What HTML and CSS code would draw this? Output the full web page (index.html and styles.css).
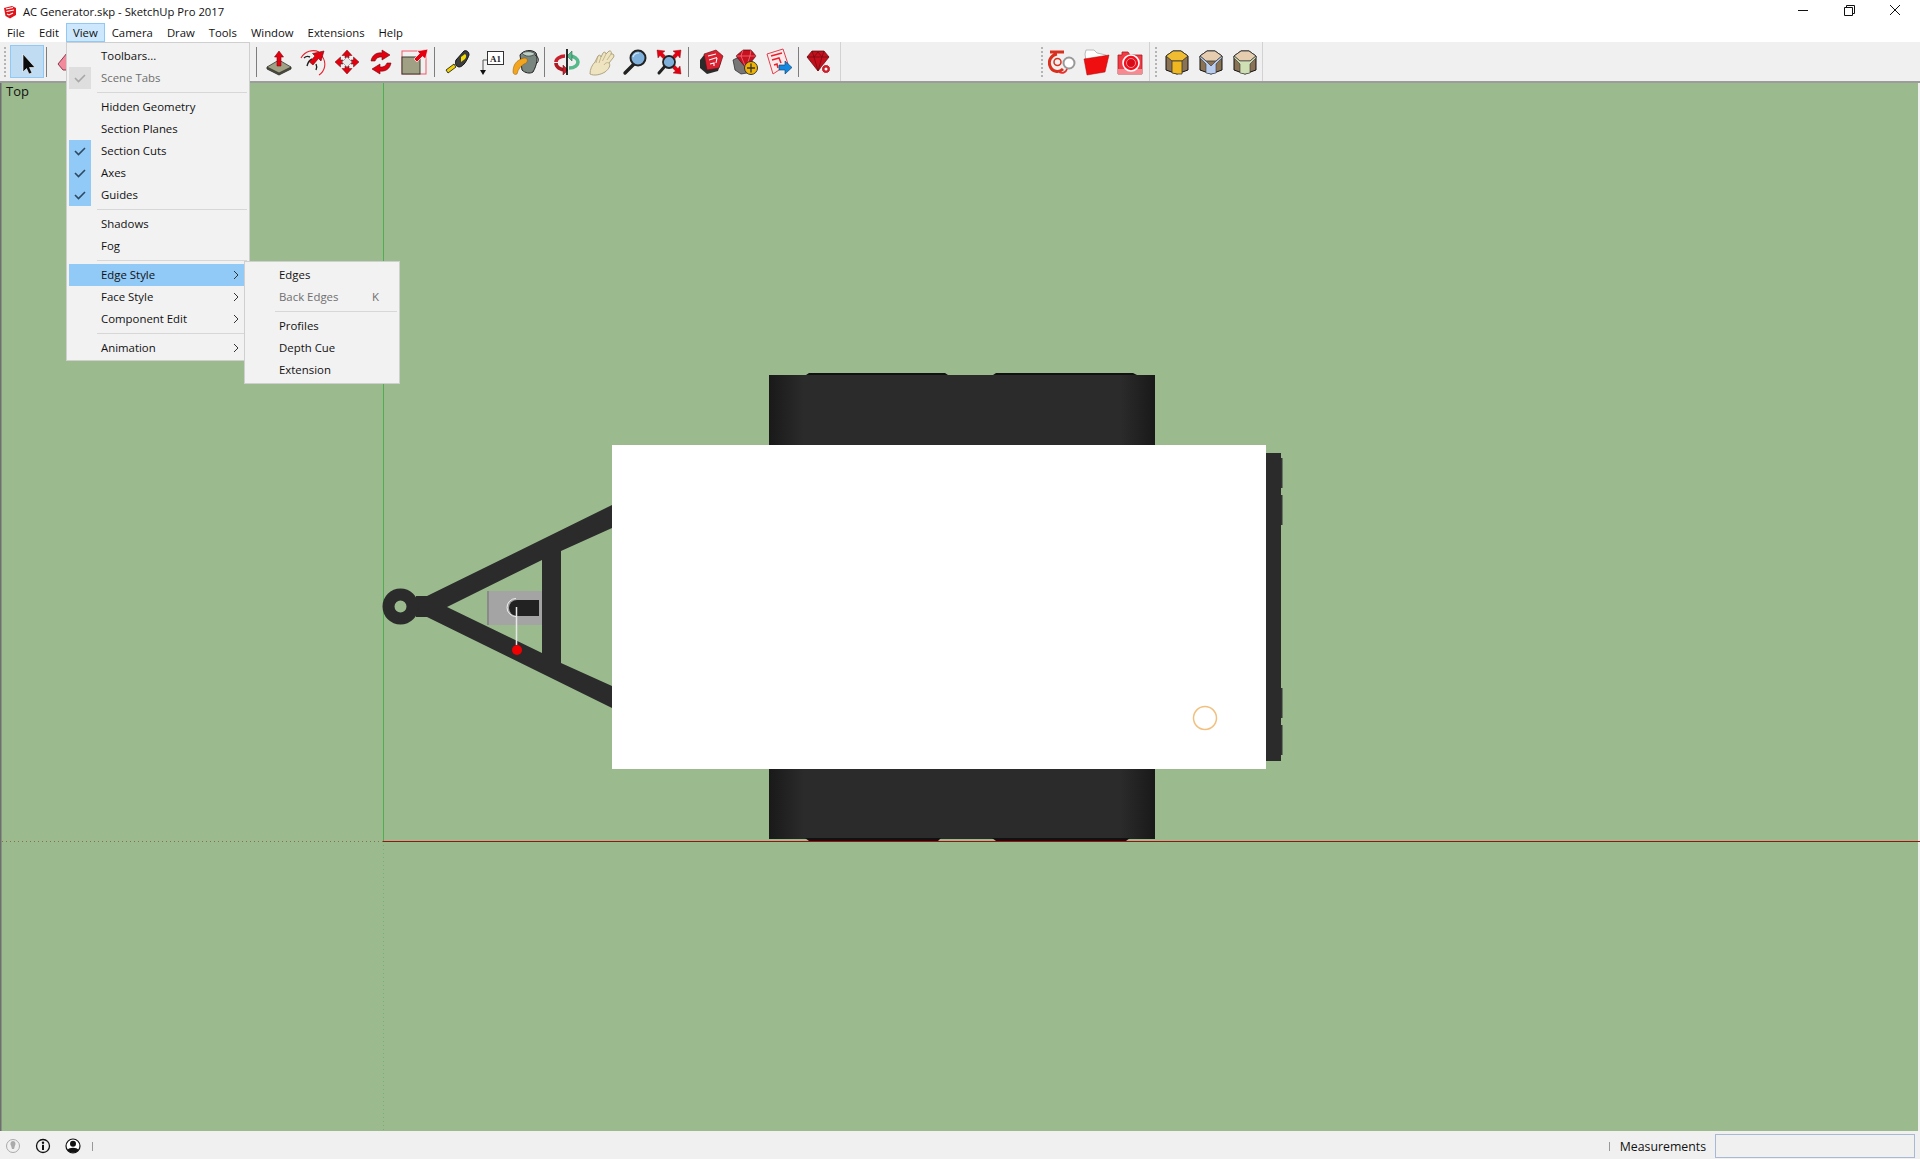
FILE: index.html
```html
<!DOCTYPE html>
<html lang="en">
<head>
<meta charset="utf-8">
<title>AC Generator.skp - SketchUp Pro 2017</title>
<link rel="stylesheet" href="styles.css">
</head>
<body>
<div class="app">
  <header class="titlebar">
    <svg class="app-logo" viewBox="0 0 14 14"><path d="M1 3 L9 1 L13 3 L13 10 L7 13.5 L2.5 11 Z" fill="#e0161c"/><path d="M3 4 L10 2.5 M3.5 6.5 L11 5 M10 8 L6 10 L4 9" stroke="#fff" stroke-width="1.1" fill="none"/></svg>
    <span class="title-text">AC Generator.skp - SketchUp Pro 2017</span>
    <div class="win-controls">
      <svg class="win-btn" viewBox="0 0 46 20"><path d="M18 10.5 H28" stroke="#111" stroke-width="1"/></svg>
      <svg class="win-btn" viewBox="0 0 46 20"><path d="M20.5 7.5 V5.5 H28.5 V13.5 H26.5 M18.5 7.5 H26.5 V15.5 H18.5 Z" stroke="#111" stroke-width="1" fill="none"/></svg>
      <svg class="win-btn" viewBox="0 0 46 20"><path d="M18 5 L28 15 M28 5 L18 15" stroke="#111" stroke-width="1"/></svg>
    </div>
  </header>

  <nav class="menubar">
    <span class="menubar-item">File</span>
    <span class="menubar-item">Edit</span>
    <span class="menubar-item menubar-item-active">View</span>
    <span class="menubar-item">Camera</span>
    <span class="menubar-item">Draw</span>
    <span class="menubar-item">Tools</span>
    <span class="menubar-item">Window</span>
    <span class="menubar-item">Extensions</span>
    <span class="menubar-item">Help</span>
  </nav>

  <div class="toolbar">
    <div class="tool-group tool-group-main">
      <span class="grip"></span>
      <span class="tool tool-selected">
        <svg class="icon" viewBox="0 0 28 28"><path d="M10 6 V24 L13.500 20.500 L16 26 L19 25 L16.500 19.500 L22 19.500 Z" fill="#0b0b0b" stroke="#fff" stroke-width=".6"/></svg>
      </span>
      <span class="tool-sep"></span>
      <span class="tool">
        <svg class="icon" viewBox="0 0 28 28"><path d="M3 16 L12 5 L25 9 L19 22 L8 22 Z" fill="#f08a9c" stroke="#8a3a48"/></svg>
      </span>
      <span class="tool-hidden"></span>
      <span class="tool-sep"></span>

      <span class="tool"><svg class="icon" viewBox="0 0 28 28"><path d="M2 19 V21 L14 27 L26 21 V19 L14 25 Z" fill="#55553f" stroke="#222" stroke-width=".8"/><path d="M2 19 L14 12 L26 19 L14 25 Z" fill="#a0a084" stroke="#333" stroke-width=".8"/><path d="M14 3 L18.500 9 H16 V18 H12 V9 H9.500 Z" fill="#e4000f" stroke="#7a0a10" stroke-width=".6"/></svg></span>
      <span class="tool"><svg class="icon" viewBox="0 0 28 28"><path d="M2 10 C6 3 14 1 20 4 M23 8 C28 15 26 23 20 27" fill="none" stroke="#e8202c" stroke-width="1.1"/><path d="M5 10 C7 8 9 8 11 9 M8 18 C9 14 11 12 13 11 M17 22 C18 20 18 18 17 16" fill="none" stroke="#222" stroke-width="1.4"/><path d="M25 3 L22 13 L19.5 10.5 L14 17 L10.5 14 L16 8 L13.5 5.5 Z" fill="#e4000f" stroke="#6a0a10" stroke-width=".6"/></svg></span>
      <span class="tool"><svg class="icon" viewBox="0 0 28 28"><path d="M14 9 L19 14 L14 19 L9 14 Z" fill="#e9e9e9" stroke="#777" stroke-width=".6"/><path d="M14 2 L19 7.5 H16 V10 L14 8.5 L12 10 V7.5 H9 Z M14 26 L19 20.500 H16 V18 L14 19.500 L12 18 V20.500 H9 Z M2 14 L7.500 9 V12 H10 L8.500 14 L10 16 H7.500 V19 Z M26 14 L20.500 9 V12 H18 L19.500 14 L18 16 H20.500 V19 Z" fill="#e4000f" stroke="#6a0a10" stroke-width=".5"/></svg></span>
      <span class="tool"><svg class="icon" viewBox="0 0 28 28"><path d="M4 13 C5 7 10 4 15 5 L15 2 L23 7 L15 12 L15 9 C12 8.500 9 10 8 13 Z M24 15 C23 21 18 24 13 23 L13 26 L5 21 L13 16 L13 19 C16 19.500 19 18 20 15 Z" fill="#e4000f" stroke="#6a0a10" stroke-width=".6"/></svg></span>
      <span class="tool"><svg class="icon" viewBox="0 0 28 28"><rect x="1" y="3" width="24" height="23" fill="none" stroke="#ee5b66"/><rect x="1" y="9" width="18" height="17" fill="#a0a084" stroke="#3a3a30"/><path d="M27 1 L24.500 11 L21.500 8.500 L16 14 L13 11 L18.500 5.500 L16 3 Z" fill="#e4000f" stroke="#fff" stroke-width=".7"/></svg></span>
      <span class="tool-sep"></span>

      <span class="tool"><svg class="icon" viewBox="0 0 28 28"><path d="M11 16 L3 22 L5 25 L13 19 Z" fill="#f0d000" stroke="#111" stroke-width=".8"/><path d="M13 12 L21 3 C24 2 26 4 26 7 C25 10 21 19 16 19 C12 18 12 15 13 12 Z" fill="#3c3c3c" stroke="#111"/><path d="M18 9 L22 6 C23.500 7 23.500 9 22 11 L18 14 Z" fill="#f4dd00"/></svg></span>
      <span class="tool"><svg class="icon" viewBox="0 0 28 28"><path d="M6 12 H12 M6 12 V24" fill="none" stroke="#555"/><path d="M3 22 H9 L6 27 Z" fill="#111"/><rect x="10.500" y="3.500" width="16" height="13" fill="#fff" stroke="#333"/><text class="icon-text" x="18.500" y="13.500">A1</text></svg></span>
      <span class="tool"><svg class="icon" viewBox="0 0 28 28"><path d="M9 7 C12 2 21 1 25 5 C27 10 26 17 22 24 C19 26 14 25 11 22 Z" fill="#79857f" stroke="#222"/><path d="M11 5 C15 3 21 3 24 6 C20 9 14 9 11 5 Z" fill="#bcd0c6" stroke="#333" stroke-width=".7"/><path d="M2 24 C2 17 5 12 13 10 C18 10 17 15 13 16 C10 18 7 21 6 26 C4 27 2 26 2 24 Z" fill="#f3a51f" stroke="#8f5b00" stroke-width=".5"/><path d="M24 7 C28 9 28 13 26 15" fill="none" stroke="#222"/></svg></span>
      <span class="tool-sep"></span>

      <span class="tool"><svg class="icon" viewBox="0 0 28 28"><path d="M12 8 C7 8 3 11 3 14" fill="none" stroke="#c8202c" stroke-width="3.600"/><path d="M3 15 C3 19 7 22 13 22" fill="none" stroke="#b01822" stroke-width="3.600"/><path d="M10 17 L15 22 L10 27 Z" fill="#c8202c" stroke="#5a1016" stroke-width=".5"/><path d="M16 20 C22 20 25 17 25 14 C25 11 21 8 17 8" fill="none" stroke="#55b98a" stroke-width="3.600"/><path d="M19 3 L14 8 L19 13 Z" fill="#55b98a" stroke="#235a40" stroke-width=".5"/><path d="M14 1 V27" stroke="#111" stroke-width="1.800"/></svg></span>
      <span class="tool"><svg class="icon" viewBox="0 0 28 28"><path d="M3 26 C3 21 5 17 8 14 L11 8 C12 6.500 14 7 14 9 L16 5 C17 3.500 19 4 19 6 L22 3 C24 2.500 25 4 24 6 L26 6 C27.500 7 27 9 26 10 L22 15 C24 17 22 21 18 24 C13 27 7 28 3 26 Z" fill="#efe4c0" stroke="#a89c78" stroke-width=".9"/><path d="M11 8 L9 15 M14 9 L12 15 M19 6 L15.500 13 M24 6 L20 12 M22 15 C20 14 18 15 17 17" fill="none" stroke="#b8ab85" stroke-width=".8"/></svg></span>
      <span class="tool"><svg class="icon" viewBox="0 0 28 28"><path d="M13 16 L4 25" stroke="#222" stroke-width="3.400" stroke-linecap="round"/><circle cx="17" cy="10" r="7.500" fill="#7fb0dc" stroke="#222" stroke-width="2"/><path d="M12 9 C13 6 15 5 18 5" fill="none" stroke="#cfe4f5" stroke-width="1.200"/></svg></span>
      <span class="tool"><svg class="icon" viewBox="0 0 28 28"><path d="M11 17 L4 25" stroke="#222" stroke-width="3" stroke-linecap="round"/><circle cx="14" cy="14" r="6" fill="#7fb0dc" stroke="#222" stroke-width="1.800"/><path d="M2 2 L10 3 L7.500 5 L10.500 8 L8 10.500 L5 7.500 L3 10 Z M26 2 L18 3 L20.500 5 L17.500 8 L20 10.500 L23 7.500 L25 10 Z M26 26 L18 25 L20.500 23 L17.500 20 L20 17.500 L23 20.500 L25 18 Z" fill="#e4000f" stroke="#7a0a10" stroke-width=".4"/></svg></span>
      <span class="tool-sep"></span>

      <span class="tool"><svg class="icon" viewBox="0 0 28 28"><path d="M3 12 L7 7 L24 14 L21 23 L10 26 L3 20 Z" fill="#2b2b2b"/><path d="M7 6 L19 2 L26 8 L22 20 L10 22 Z" fill="#d9202e" stroke="#5a1016" stroke-width=".6"/><path d="M11 8 L19 6 M12 12 L20 9.500 M20 10 L19 15 M13 16 L17 15 V18" fill="none" stroke="#fff" stroke-width="1.100"/></svg></span>
      <span class="tool"><svg class="icon" viewBox="0 0 28 28"><path d="M2 12 L8 9 L22 14 L22 24 L10 26 L4 22 Z" fill="#777" stroke="#222" stroke-width=".7"/><path d="M5 8 L12 2 H20 L25 8 L15 20 Z" fill="#c8101e" stroke="#4e0a10" stroke-width=".7"/><path d="M5 8 H25 M12 2 L10 8 L15 20 L19 8 L20 2" fill="none" stroke="#f2808a" stroke-width=".7"/><circle cx="20" cy="20" r="6.500" fill="#f0b400" stroke="#333"/><path d="M20 15.500 V24.500 M16 20 H24" stroke="#333" stroke-width="1.300"/></svg></span>
      <span class="tool"><svg class="icon" viewBox="0 0 28 28"><path d="M2 6 L18 1 L23 16 L8 26 Z" fill="#fde9e9" stroke="#e0404c"/><path d="M6 8 L17 5 M7 12 L14 10 L16 15 M9 17 L12 16 L13 20" fill="none" stroke="#e8202c" stroke-width="1.500"/><path d="M14 17 H20 V13 L27 19.500 L20 26 V22 H14 Z" fill="#1488e0" stroke="#0b3c66" stroke-width=".6"/></svg></span>
      <span class="tool-sep tool-sep-last"></span>

      <span class="tool"><svg class="icon" viewBox="0 0 28 28"><path d="M2 9 L7 3 H19 L24 9 L13 23 Z" fill="#c4101c" stroke="#4e0a10" stroke-width=".7"/><path d="M2 9 H24 M7 3 L9 9 L13 23 L17 9 L19 3 M9 9 L13 4 L17 9" fill="none" stroke="#7a0a12" stroke-width=".8"/><circle cx="21" cy="21" r="4.500" fill="#c8202c" stroke="#fff"/><circle cx="21" cy="21" r="1.500" fill="#fff"/></svg></span>
    </div>

    <div class="tool-group tool-group-views">
      <span class="grip"></span>
      <span class="tool"><svg class="icon" viewBox="0 0 28 28"><path d="M2 4 H16 M9 6 C3 7 0 13 2 18 C4 24 11 25 15 21" fill="none" stroke="#d8301c" stroke-width="3"/><circle cx="9.500" cy="14" r="3.500" fill="none" stroke="#d8301c" stroke-width="1.500"/><circle cx="21" cy="15" r="5.500" fill="#fff" stroke="#999" stroke-width="2"/><path d="M11 24 C15 26 18 24 19 21" fill="none" stroke="#e8302c" stroke-width="1.800"/></svg></span>
      <span class="tool"><svg class="icon" viewBox="0 0 28 28"><path d="M3 6 L4 2 H12 L15 5 L24 7 L23 12 L4 13 Z" fill="#fff" stroke="#aaa" stroke-width=".8"/><path d="M2 11 L27 7 L23 24 L5 27 Z" fill="#f00f10" stroke="#a80808" stroke-width=".5"/></svg></span>
      <span class="tool"><svg class="icon" viewBox="0 0 28 28"><path d="M2 7 H6 V4 H12 L14 7 H26 V26 H2 Z" fill="#f03a44" stroke="#a81c24" stroke-width=".8"/><path d="M2 21 H26 V26 H2 Z" fill="#f58a90"/><circle cx="15" cy="15" r="8" fill="#ef1020" stroke="#fff" stroke-width="1.600"/><circle cx="15" cy="15" r="4.500" fill="#d80a18" stroke="#ff8a90"/></svg></span>
    </div>

    <div class="tool-group tool-group-styles">
      <span class="grip"></span>
      <span class="tool"><svg class="icon" viewBox="0 0 28 28"><path d="M3 8 L10 3 H18 L25 8 V22 L14 26 L3 22 Z" fill="#8a7355" stroke="#111"/><path d="M3 8 L10 3 H18 L25 8 L19 13 H9 Z" fill="#f0bd32" stroke="#333" stroke-width=".8"/><path d="M9 13 H19 V26 L14 26 L9 25 Z" fill="#f0b820" stroke="#333" stroke-width=".8"/></svg></span>
      <span class="tool"><svg class="icon" viewBox="0 0 28 28"><path d="M3 8 L10 3 H18 L25 8 V22 L14 26 L3 22 Z" fill="#8a7355" stroke="#111"/><path d="M3 8 L10 3 H18 L25 8 L19 13 H9 Z" fill="#e6cdb0" stroke="#333" stroke-width=".8"/><path d="M3 8 L9 13 L14 18 L19 13 L25 8 L25 10 L19 16 V25 L14 26 L9 25 V16 L3 10 Z" fill="#b9cdf0" stroke="#333" stroke-width=".6"/></svg></span>
      <span class="tool"><svg class="icon" viewBox="0 0 28 28"><path d="M3 8 L10 3 H18 L25 8 V22 L14 26 L3 22 Z" fill="#8a7355" stroke="#111"/><path d="M3 8 L10 3 H18 L25 8 L19 13 H9 Z" fill="#e6cdb0" stroke="#333" stroke-width=".8"/><path d="M3 8 L9 13 H19 L25 8 V10 L19 16 V25 L14 26 L9 25 V16 L3 10 Z" fill="#cfe0b4" stroke="#333" stroke-width=".6"/></svg></span>
    </div>
  </div>

  <main class="viewport">
    <svg class="scene" viewBox="0 83 1920 1048" aria-label="Trailer model, top view">
      <defs>
        <linearGradient id="tire" x1="0" x2="1" y1="0" y2="0">
          <stop offset="0" stop-color="#191919"/>
          <stop offset=".09" stop-color="#2b2b2b"/>
          <stop offset=".91" stop-color="#2b2b2b"/>
          <stop offset="1" stop-color="#191919"/>
        </linearGradient>
      </defs>
      <rect x="0" y="83" width="1920" height="1048" fill="#9bbb8f"/>
      <rect x="0" y="83" width="1.500" height="1048" fill="#6e6e6e"/>
      <rect x="1918" y="83" width="2" height="1048" fill="#f0f0f0"/>

      <path d="M383.500 83 V841" stroke="#4fae4f" stroke-width="1"/>
      <path d="M383.500 841 V1131" stroke="#6fb56f" stroke-width="1" stroke-dasharray="1 3"/>
      <path d="M2 841.500 H383" stroke="#8f6b50" stroke-width="1" stroke-dasharray="1 3"/>

      <path d="M806 375 L809 373 H945 L948 375 Z" fill="#111"/>
      <path d="M993 375 L996 373 H1133 L1137 375 Z" fill="#111"/>
      <rect x="769" y="375" width="386" height="464" fill="url(#tire)"/>
      <path d="M805 838 L809 841 H938 L941 838 Z" fill="#111"/>
      <path d="M992 838 L996 841 H1126 L1130 838 Z" fill="#111"/>

      <rect x="1266" y="453" width="15" height="308" fill="#2b2b2b"/>
      <rect x="1281" y="458" width="1.500" height="30" fill="#333"/>
      <rect x="1281" y="495" width="1.500" height="30" fill="#333"/>
      <rect x="1281" y="688" width="1.500" height="30" fill="#333"/>
      <rect x="1281" y="725" width="1.500" height="30" fill="#333"/>

      <path d="M383 841.500 H1920" stroke="#a01010" stroke-width="1"/>

      <path fill-rule="evenodd" fill="#2b2b2b" d="M416 596 H427 L612 505 V528 L561 551 V663 L612 686 V708 L427 617 H416 Z M447 607 L542 560 V653 Z"/>
      <path fill-rule="evenodd" fill="#2b2b2b" d="M400.500 588.500 A18 18 0 1 0 400.500 624.500 A18 18 0 1 0 400.500 588.500 Z M400.500 600.500 A6 6 0 1 1 400.500 612.500 A6 6 0 1 1 400.500 600.500 Z"/>

      <rect x="487" y="591" width="55" height="34" fill="#a4a4a4"/>
      <rect x="487" y="591" width="2" height="34" fill="#8a8a8a"/>
      <path d="M539 600 H517 A8 8 0 0 0 517 616 H539 Z" fill="#222"/>
      <path d="M516 598.500 A9 9 0 0 0 516 616.500" fill="none" stroke="#eee" stroke-width="1"/>
      <path d="M516.500 607 V645" stroke="#e8e8e8" stroke-width="1.500"/>
      <circle cx="517" cy="650" r="5" fill="#f00000"/>

      <rect x="612" y="445" width="654" height="324" fill="#fff"/>
      <circle cx="1205" cy="718" r="11.500" fill="none" stroke="#f2c07e" stroke-width="1.500"/>
    </svg>
    <span class="view-label">Top</span>
  </main>

  <footer class="statusbar">
    <svg class="status-icon" viewBox="0 0 16 16"><circle cx="8" cy="8" r="6.500" fill="none" stroke="#aaa"/><path d="M8 3 C5.500 3 5 6 6 7.500 L7 11 H9 L10 7.500 C11 6 10.500 3 8 3 Z" fill="#aaa"/></svg>
    <svg class="status-icon" viewBox="0 0 16 16"><circle cx="8" cy="8" r="6.500" fill="none" stroke="#111" stroke-width="1.300"/><circle cx="8" cy="4.800" r="1.200" fill="#111"/><rect x="7" y="6.800" width="2" height="5.200" fill="#111"/></svg>
    <svg class="status-icon" viewBox="0 0 16 16"><circle cx="8" cy="8" r="7" fill="#fff" stroke="#111" stroke-width="1.200"/><circle cx="8" cy="5.800" r="3" fill="#111"/><path d="M2.500 12 C4 9 12 9 13.500 12 C12 15.500 4 15.500 2.500 12 Z" fill="#111"/></svg>
    <span class="status-sep"></span>
    <span class="status-sep status-sep-right"></span>
    <span class="measure-label">Measurements</span>
    <span class="measure-box"></span>
  </footer>

  <div class="menu menu-view">
    <div class="menu-row"><span class="check"></span><span class="label">Toolbars...</span></div>
    <div class="menu-row menu-row-off"><span class="check check-off"><svg class="check-mark" viewBox="0 0 22 22"><path d="M6 11 L9.500 14.500 L16 8" fill="none" stroke="#a8a8a8" stroke-width="1.600"/></svg></span><span class="label">Scene Tabs</span></div>
    <div class="menu-sep"></div>
    <div class="menu-row"><span class="check"></span><span class="label">Hidden Geometry</span></div>
    <div class="menu-row"><span class="check"></span><span class="label">Section Planes</span></div>
    <div class="menu-row"><span class="check check-on"><svg class="check-mark" viewBox="0 0 22 22"><path d="M6 11 L9.500 14.500 L16 8" fill="none" stroke="#2d4a62" stroke-width="1.600"/></svg></span><span class="label">Section Cuts</span></div>
    <div class="menu-row"><span class="check check-on"><svg class="check-mark" viewBox="0 0 22 22"><path d="M6 11 L9.500 14.500 L16 8" fill="none" stroke="#2d4a62" stroke-width="1.600"/></svg></span><span class="label">Axes</span></div>
    <div class="menu-row"><span class="check check-on"><svg class="check-mark" viewBox="0 0 22 22"><path d="M6 11 L9.500 14.500 L16 8" fill="none" stroke="#2d4a62" stroke-width="1.600"/></svg></span><span class="label">Guides</span></div>
    <div class="menu-sep"></div>
    <div class="menu-row"><span class="check"></span><span class="label">Shadows</span></div>
    <div class="menu-row"><span class="check"></span><span class="label">Fog</span></div>
    <div class="menu-sep"></div>
    <div class="menu-row menu-row-active"><span class="check"></span><span class="label">Edge Style</span><svg class="chevron" viewBox="0 0 6 10"><path d="M1 1 L5 5 L1 9" fill="none" stroke="#333"/></svg></div>
    <div class="menu-row"><span class="check"></span><span class="label">Face Style</span><svg class="chevron" viewBox="0 0 6 10"><path d="M1 1 L5 5 L1 9" fill="none" stroke="#333"/></svg></div>
    <div class="menu-row"><span class="check"></span><span class="label">Component Edit</span><svg class="chevron" viewBox="0 0 6 10"><path d="M1 1 L5 5 L1 9" fill="none" stroke="#333"/></svg></div>
    <div class="menu-sep"></div>
    <div class="menu-row"><span class="check"></span><span class="label">Animation</span><svg class="chevron" viewBox="0 0 6 10"><path d="M1 1 L5 5 L1 9" fill="none" stroke="#333"/></svg></div>
  </div>

  <div class="menu menu-edge">
    <div class="menu-row"><span class="check"></span><span class="label">Edges</span></div>
    <div class="menu-row menu-row-off"><span class="check"></span><span class="label">Back Edges</span><span class="shortcut">K</span></div>
    <div class="menu-sep"></div>
    <div class="menu-row"><span class="check"></span><span class="label">Profiles</span></div>
    <div class="menu-row"><span class="check"></span><span class="label">Depth Cue</span></div>
    <div class="menu-row"><span class="check"></span><span class="label">Extension</span></div>
  </div>
</div>
</body>
</html>
```

FILE: styles.css
```css
* { box-sizing: border-box; }

html, body {
  margin: 0;
  padding: 0;
  background: #f0f0f0;
}

body {
  font-family: "Open Sans", "Liberation Sans", sans-serif;
  font-size: 11.4px;
  color: #111;
}

.app {
  position: relative;
  width: 1920px;
  height: 1159px;
  overflow: hidden;
  display: flex;
  flex-direction: column;
  background: #fff;
}

/* title bar */
.titlebar {
  flex: none;
  height: 23px;
  display: flex;
  align-items: center;
  background: #fff;
  padding-left: 3px;
}

.app-logo {
  width: 14px;
  height: 14px;
  margin-right: 6px;
}

.title-text {
  font-size: 11.25px;
  color: #111;
}

.win-controls {
  margin-left: auto;
  display: flex;
  align-self: flex-start;
  padding-right: 2px;
}

.win-btn {
  width: 46px;
  height: 20px;
  display: block;
}

/* menu bar */
.menubar {
  flex: none;
  height: 19px;
  display: flex;
  background: #fff;
  font-size: 11.32px;
}

.menubar-item {
  padding: 0 7px;
  line-height: 18px;
  border: 1px solid transparent;
  border-width: 1px 0;
}

.menubar-item-active {
  background: #cde8fc;
  border: 1px solid #90c8f6;
  padding: 0 6px;
}

/* tool bar */
.toolbar {
  flex: none;
  height: 41px;
  display: flex;
  background: #f0f0f0;
  border-bottom: 2px solid #9c9c9c;
}

.tool-group {
  display: flex;
  align-items: center;
  height: 39px;
  border-right: 1px solid #d2d2d2;
}

.tool-group-main {
  width: 841px;
  padding-left: 4px;
}

.tool-group-views {
  width: 114px;
  margin-left: 195px;
  padding-left: 5px;
}

.tool-group-styles {
  width: 113px;
  padding-left: 5px;
}

.grip {
  flex: none;
  width: 3px;
  height: 30px;
  margin-right: 3px;
  border-left: 2px dotted #b4b4b4;
}

.tool-group-views .grip {
  margin-right: 1px;
}

.tool-group-styles .grip {
  margin-right: 2px;
}

.tool {
  flex: none;
  width: 34px;
  height: 33px;
  display: flex;
  align-items: center;
  justify-content: center;
}

.tool-selected {
  background: #c0dcf3;
  border: 1px solid #90c8f6;
}

.tool-hidden {
  flex: none;
  width: 168px;
}

.tool-sep {
  flex: none;
  width: 1px;
  height: 30px;
  margin: 0 5px 0 2px;
  background: #7d7d7d;
}

.tool-sep-last {
  margin: 0 3px 0 2px;
}

.icon {
  width: 28px;
  height: 28px;
  display: block;
}

.icon-text {
  font-family: "Liberation Serif", serif;
  font-size: 9px;
  font-weight: bold;
  text-anchor: middle;
  fill: #222;
}

/* 3D view */
.viewport {
  position: relative;
  flex: none;
  height: 1048px;
  background: #9bbb8f;
}

.scene {
  display: block;
  width: 1920px;
  height: 1048px;
}

.view-label {
  position: absolute;
  left: 6px;
  top: -1px;
  font-size: 13px;
  line-height: 18px;
  color: #111;
}

/* status bar */
.statusbar {
  flex: none;
  height: 28px;
  display: flex;
  align-items: center;
  background: #f0f0f0;
  padding: 2px 0 0 5px;
}

.status-icon {
  flex: none;
  width: 16px;
  height: 16px;
  margin-right: 14px;
}

.status-sep {
  flex: none;
  width: 1px;
  height: 9px;
  margin-left: -3px;
  background: #999;
}

.status-sep-right {
  margin-left: auto;
}

.measure-label {
  margin-left: 10px;
  padding-top: 1px;
  font-size: 12.3px;
  color: #111;
}

.measure-box {
  flex: none;
  width: 200px;
  height: 24px;
  margin: 0 5px 0 9px;
  background: #f0f0f0;
  border: 1px solid #a9b9d3;
}

/* drop-down menus */
.menu {
  position: absolute;
  background: #f2f2f2;
  border: 1px solid #cfcfcf;
  padding: 2px;
}

.menu-view {
  left: 66px;
  top: 42px;
  width: 184px;
  height: 319px;
}

.menu-edge {
  left: 244px;
  top: 261px;
  width: 156px;
  height: 123px;
}

.menu-row {
  height: 22px;
  display: flex;
  align-items: center;
  color: #111;
}

.menu-row-active {
  background: #91c9f7;
}

.menu-row-off {
  color: #6f6f6f;
}

.check {
  flex: none;
  width: 22px;
  height: 22px;
  margin-right: 10px;
}

.check-on {
  background: #91c9f7;
}

.check-off {
  background: #dedede;
}

.check-mark {
  display: block;
  width: 22px;
  height: 22px;
}

.label {
  flex: 1;
  padding-bottom: 2px;
}

.chevron {
  flex: none;
  width: 6px;
  height: 10px;
  margin-right: 8px;
}

.shortcut {
  flex: none;
  margin-right: 18px;
  padding-bottom: 2px;
}

.menu-sep {
  height: 7px;
  margin-left: 28px;
  padding-top: 3px;
}

.menu-sep::after {
  content: "";
  display: block;
  height: 1px;
  background: #d7d7d7;
}
```
